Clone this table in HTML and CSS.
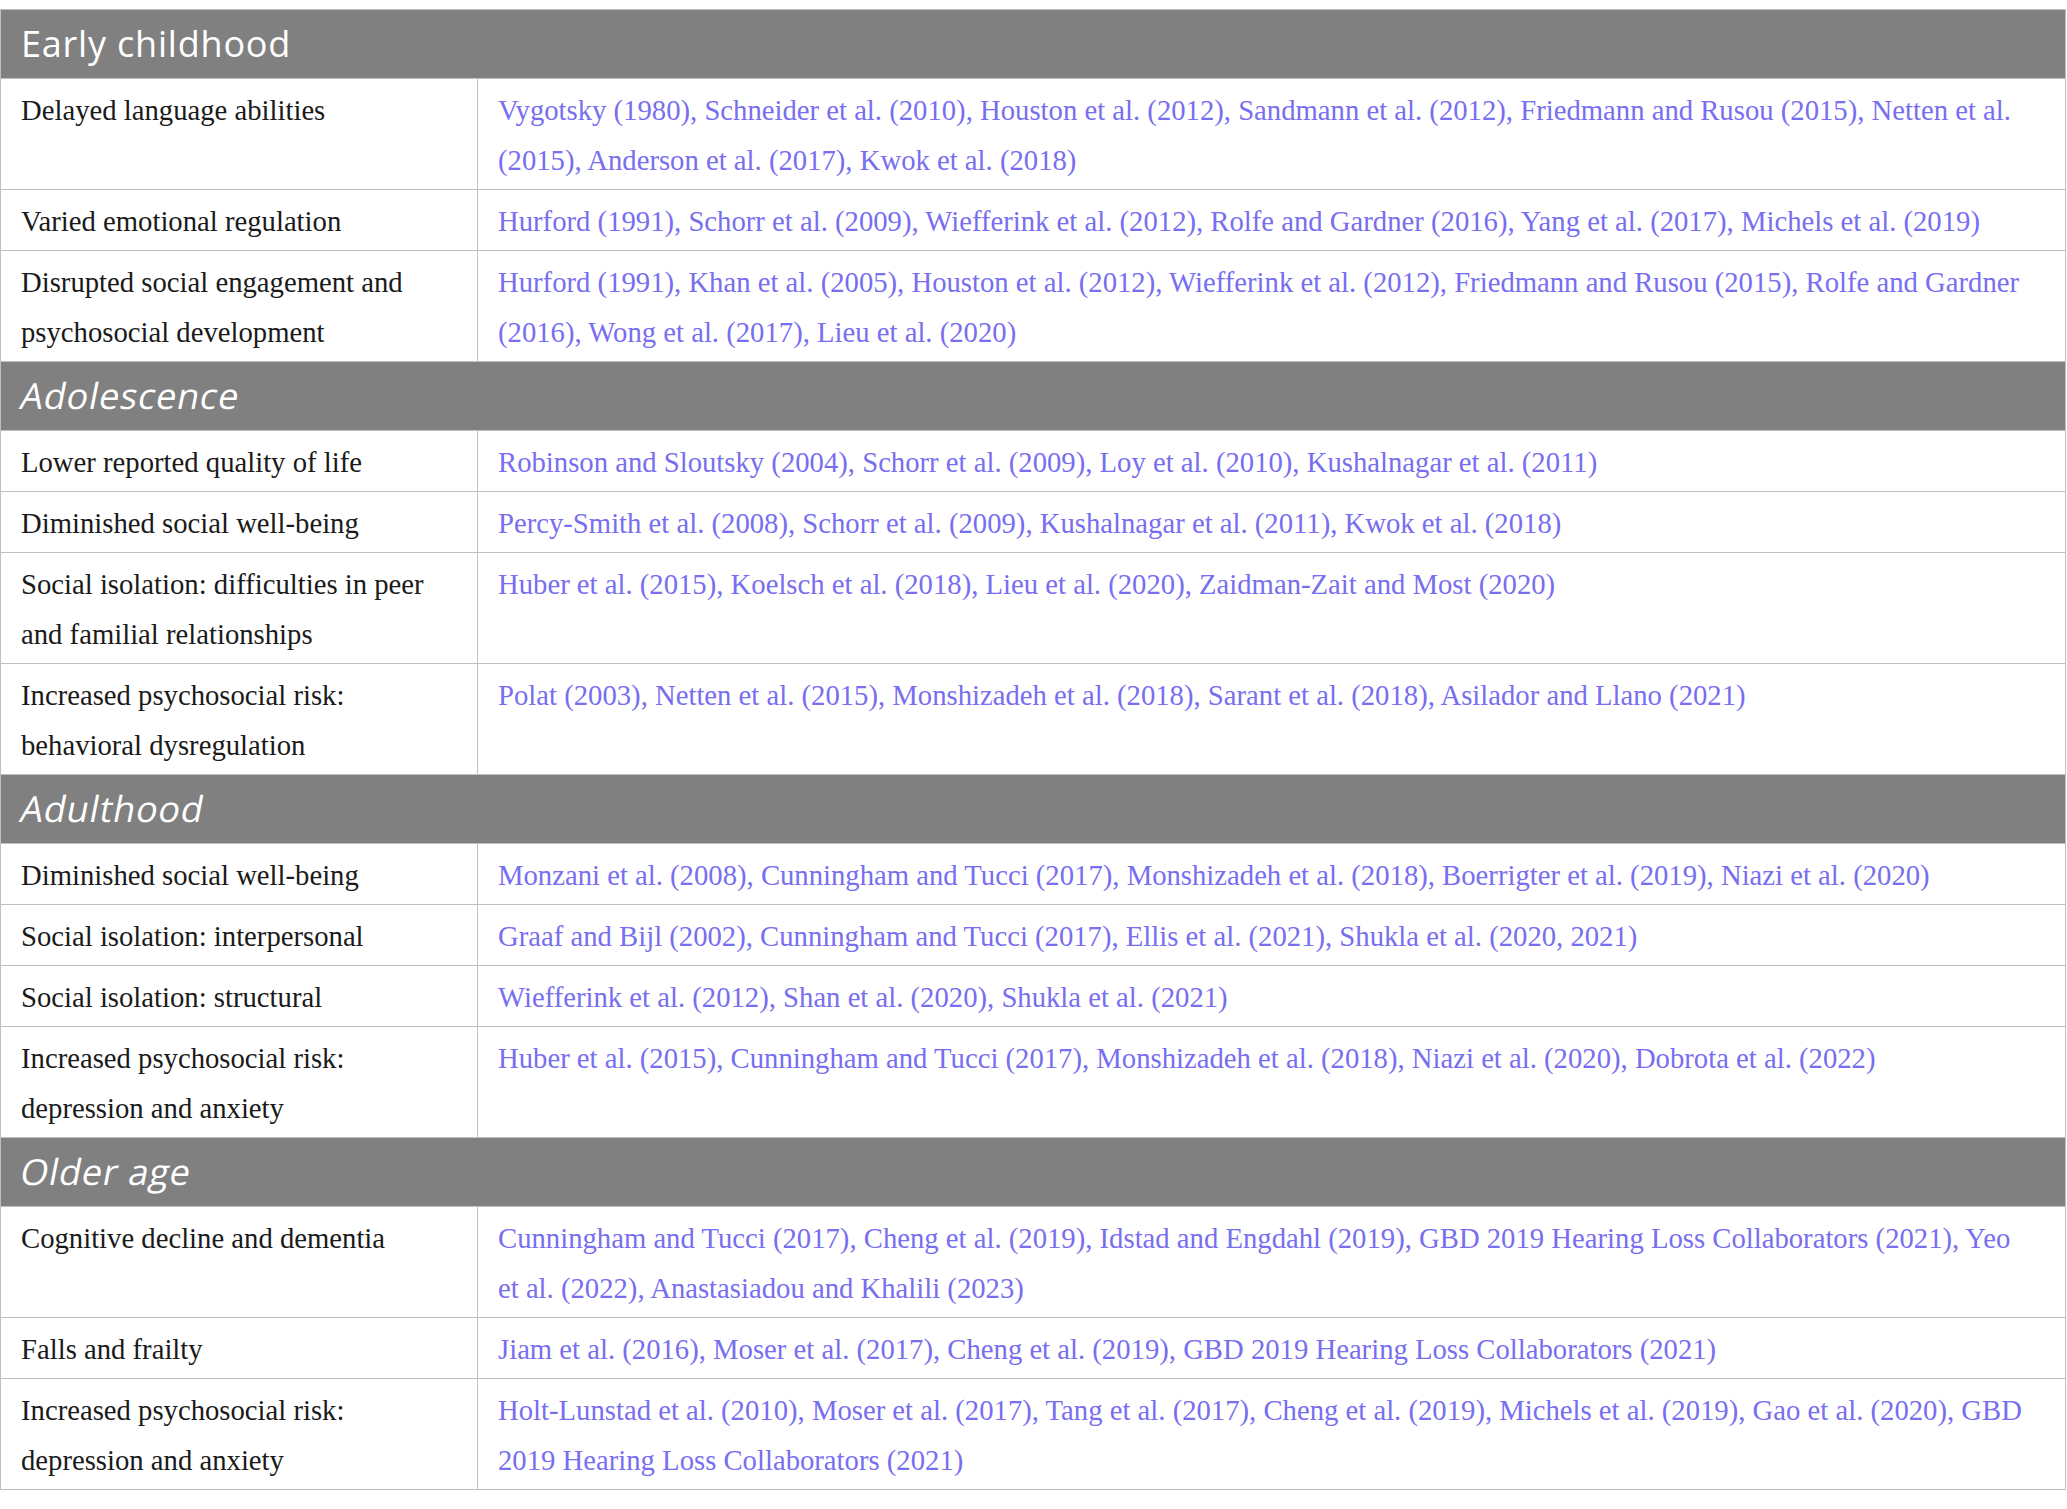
FILE: index.html
```html
<!DOCTYPE html>
<html lang="en">
<head>
<meta charset="utf-8">
<title>Table</title>
<link rel="stylesheet" href="styles.css">
</head>
<body>
<table class="tbl">
  <colgroup><col class="c1"><col class="c2"></colgroup>
  <tbody>
    <tr class="sec"><th colspan="2"><span class="hd">Early childhood</span></th></tr>
    <tr><td>Delayed language abilities</td><td class="refs">Vygotsky (1980), Schneider et al. (2010), Houston et al. (2012), Sandmann et al. (2012), Friedmann and Rusou (2015), Netten et al. (2015), Anderson et al. (2017), Kwok et al. (2018)</td></tr>
    <tr><td>Varied emotional regulation</td><td class="refs">Hurford (1991), Schorr et al. (2009), Wiefferink et al. (2012), Rolfe and Gardner (2016), Yang et al. (2017), Michels et al. (2019)</td></tr>
    <tr><td>Disrupted social engagement and psychosocial development</td><td class="refs">Hurford (1991), Khan et al. (2005), Houston et al. (2012), Wiefferink et al. (2012), Friedmann and Rusou (2015), Rolfe and Gardner (2016), Wong et al. (2017), Lieu et al. (2020)</td></tr>
    <tr class="sec"><th colspan="2"><em class="hd it">Adolescence</em></th></tr>
    <tr><td>Lower reported quality of life</td><td class="refs">Robinson and Sloutsky (2004), Schorr et al. (2009), Loy et al. (2010), Kushalnagar et al. (2011)</td></tr>
    <tr><td>Diminished social well-being</td><td class="refs">Percy-Smith et al. (2008), Schorr et al. (2009), Kushalnagar et al. (2011), Kwok et al. (2018)</td></tr>
    <tr><td>Social isolation: difficulties in peer and familial relationships</td><td class="refs">Huber et al. (2015), Koelsch et al. (2018), Lieu et al. (2020), Zaidman-Zait and Most (2020)</td></tr>
    <tr><td>Increased psychosocial risk: behavioral dysregulation</td><td class="refs">Polat (2003), Netten et al. (2015), Monshizadeh et al. (2018), Sarant et al. (2018), Asilador and Llano (2021)</td></tr>
    <tr class="sec"><th colspan="2"><em class="hd it">Adulthood</em></th></tr>
    <tr><td>Diminished social well-being</td><td class="refs">Monzani et al. (2008), Cunningham and Tucci (2017), Monshizadeh et al. (2018), Boerrigter et al. (2019), Niazi et al. (2020)</td></tr>
    <tr><td>Social isolation: interpersonal</td><td class="refs">Graaf and Bijl (2002), Cunningham and Tucci (2017), Ellis et al. (2021), Shukla et al. (2020, 2021)</td></tr>
    <tr><td>Social isolation: structural</td><td class="refs">Wiefferink et al. (2012), Shan et al. (2020), Shukla et al. (2021)</td></tr>
    <tr><td>Increased psychosocial risk: depression and anxiety</td><td class="refs">Huber et al. (2015), Cunningham and Tucci (2017), Monshizadeh et al. (2018), Niazi et al. (2020), Dobrota et al. (2022)</td></tr>
    <tr class="sec"><th colspan="2"><em class="hd it">Older age</em></th></tr>
    <tr><td>Cognitive decline and dementia</td><td class="refs">Cunningham and Tucci (2017), Cheng et al. (2019), Idstad and Engdahl (2019), GBD 2019 Hearing Loss Collaborators (2021), Yeo et al. (2022), Anastasiadou and Khalili (2023)</td></tr>
    <tr><td>Falls and frailty</td><td class="refs">Jiam et al. (2016), Moser et al. (2017), Cheng et al. (2019), GBD 2019 Hearing Loss Collaborators (2021)</td></tr>
    <tr><td>Increased psychosocial risk: depression and anxiety</td><td class="refs">Holt-Lunstad et al. (2010), Moser et al. (2017), Tang et al. (2017), Cheng et al. (2019), Michels et al. (2019), Gao et al. (2020), GBD 2019 Hearing Loss Collaborators (2021)</td></tr>
  </tbody>
</table>
</body>
</html>
```
FILE: styles.css
```css
html, body {
  margin: 0;
  padding: 0;
  background: #ffffff;
}
body {
  padding-top: 9px;
}
.tbl {
  width: 2066px;
  border-collapse: collapse;
  table-layout: fixed;
  font-family: "Liberation Serif", "DejaVu Serif", serif;
  font-size: 28.7px;
  color: #1a1a1a;
}
.c1 { width: 477px; }
.tbl td {
  border: 1px solid #bfbfbf;
  padding: 6px 20px 4px 20px;
  line-height: 50px;
  vertical-align: top;
  text-align: left;
}
.tbl td.refs {
  color: #786ef0;
  padding-right: 32px;
}
.tbl .sec th {
  background: #808080;
  color: #ffffff;
  border: 1px solid #bfbfbf;
  font-family: "Open Sans", "Liberation Sans", sans-serif;
  font-weight: 400;
  font-size: 36px;
  line-height: 68px;
  height: 68px;
  padding: 0 20px;
  text-align: left;
  vertical-align: middle;
}
.hd {
  display: inline-block;
  letter-spacing: 0.8px;
}
.hd.it {
  font-style: normal;
  transform: skewX(-11deg);
  letter-spacing: 0.8px;
}
```
